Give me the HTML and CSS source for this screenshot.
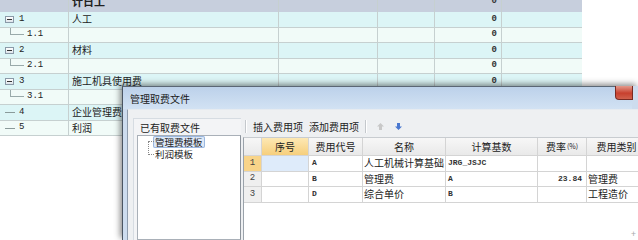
FILE: index.html
```html
<!DOCTYPE html>
<html lang="zh">
<head>
  <meta charset="UTF-8" />
  <title>管理取费文件</title>
  <link rel="stylesheet" href="styles.css">
</head>
<body>
  <div class="sheet">
    <div class="row head">
      <div class="c c0"></div>
      <div class="c c1"><span class="cut">计日工</span></div>
      <div class="c c2"></div>
      <div class="c c3"></div>
      <div class="c c4"><b class="num">0</b></div>
      <div class="c c5"></div>
    </div>
    <div class="row odd">
      <div class="c c0"><span class="box"></span><span class="no">1</span></div>
      <div class="c c1">人工</div>
      <div class="c c2"></div><div class="c c3"></div>
      <div class="c c4"><span class="num">0</span></div><div class="c c5"></div>
    </div>
    <div class="row even">
      <div class="c c0"><span class="elbow"></span><span class="no sub">1.1</span></div>
      <div class="c c1"></div>
      <div class="c c2"></div><div class="c c3"></div>
      <div class="c c4"><span class="num">0</span></div><div class="c c5"></div>
    </div>
    <div class="row odd">
      <div class="c c0"><span class="box"></span><span class="no">2</span></div>
      <div class="c c1">材料</div>
      <div class="c c2"></div><div class="c c3"></div>
      <div class="c c4"><span class="num">0</span></div><div class="c c5"></div>
    </div>
    <div class="row even">
      <div class="c c0"><span class="elbow"></span><span class="no sub">2.1</span></div>
      <div class="c c1"></div>
      <div class="c c2"></div><div class="c c3"></div>
      <div class="c c4"><span class="num">0</span></div><div class="c c5"></div>
    </div>
    <div class="row odd">
      <div class="c c0"><span class="box"></span><span class="no">3</span></div>
      <div class="c c1">施工机具使用费</div>
      <div class="c c2"></div><div class="c c3"></div>
      <div class="c c4"><span class="num">0</span></div><div class="c c5"></div>
    </div>
    <div class="row even">
      <div class="c c0"><span class="elbow"></span><span class="no sub">3.1</span></div>
      <div class="c c1"></div>
      <div class="c c2"></div><div class="c c3"></div>
      <div class="c c4"></div><div class="c c5"></div>
    </div>
    <div class="row odd">
      <div class="c c0"><span class="dash"></span><span class="no">4</span></div>
      <div class="c c1">企业管理费</div>
      <div class="c c2"></div><div class="c c3"></div>
      <div class="c c4"></div><div class="c c5"></div>
    </div>
    <div class="row even">
      <div class="c c0"><span class="dash"></span><span class="no">5</span></div>
      <div class="c c1">利润</div>
      <div class="c c2"></div><div class="c c3"></div>
      <div class="c c4"></div><div class="c c5"></div>
    </div>
  </div>

  <div class="dialog">
    <div class="titlebar">
      <span class="title">管理取费文件</span>
      <span class="close"></span>
    </div>
    <div class="client">
      <div class="files">
        <div class="files-head">已有取费文件</div>
        <div class="tree">
          <div class="tree-item selected">管理费模板</div>
          <div class="tree-item">利润模板</div>
        </div>
      </div>
      <div class="items">
        <div class="toolbar">
          <span class="sep"></span>
          <span class="tool">插入费用项</span>
          <span class="tool">添加费用项</span>
          <span class="sep"></span>
          <svg class="arrow" width="9" height="9" viewBox="0 0 9 9"><path d="M4.5 1 L8 4.5 H6 V8 H3 V4.5 H1 Z" fill="#c8c8c8"/></svg>
          <svg class="arrow" width="9" height="9" viewBox="0 0 9 9"><path d="M4.5 8 L8 4.5 H6 V1 H3 V4.5 H1 Z" fill="#4a78d0"/></svg>
        </div>
        <div class="grid">
          <div class="g-row g-head">
            <div class="g rn"></div>
            <div class="g w1 sorted">序号</div>
            <div class="g w2">费用代号</div>
            <div class="g w3">名称</div>
            <div class="g w4">计算基数</div>
            <div class="g w5">费率<small>(%)</small></div>
            <div class="g w6">费用类别</div>
          </div>
          <div class="g-row">
            <div class="g rn current">1</div>
            <div class="g w1 focus"></div>
            <div class="g w2 code">A</div>
            <div class="g w3">人工机械计算基础</div>
            <div class="g w4 code">JRG_JSJC</div>
            <div class="g w5"></div>
            <div class="g w6"></div>
          </div>
          <div class="g-row">
            <div class="g rn">2</div>
            <div class="g w1"></div>
            <div class="g w2 code">B</div>
            <div class="g w3">管理费</div>
            <div class="g w4 code">A</div>
            <div class="g w5 code right">23.84</div>
            <div class="g w6">管理费</div>
          </div>
          <div class="g-row">
            <div class="g rn">3</div>
            <div class="g w1"></div>
            <div class="g w2 code">D</div>
            <div class="g w3">综合单价</div>
            <div class="g w4 code">B</div>
            <div class="g w5"></div>
            <div class="g w6">工程造价</div>
          </div>
        </div>
      </div>
    </div>
    <span class="grip">+</span>
  </div>
</body>
</html>
```

FILE: styles.css
```css
:root {
  --cyan: #dcf5f6;
  --pale: #f1fbf8;
  --line: #c6d0d0;
  --cell: #d4d4d4;
}

* {
  box-sizing: border-box;
  margin: 0;
  padding: 0;
}

body {
  font-family: "Noto Sans CJK SC", "Noto Sans", sans-serif;
  font-size: 10px;
  color: #222;
  background: #ffffff;
  width: 638px;
  height: 240px;
  overflow: hidden;
  position: relative;
}

/* background sheet */
.sheet {
  width: 582px;
}

.row {
  display: flex;
  height: 15.5px;
  border-bottom: 1px solid var(--line);
}

.row.head {
  height: 12px;
  background: #c7cfdd;
  border-bottom: none;
}

.row.odd { background: var(--cyan); }
.row.even { background: var(--pale); }

.c {
  position: relative;
  display: flex;
  align-items: center;
  border-right: 1px solid var(--line);
  line-height: 1;
  overflow: hidden;
}

.c0 { width: 69px; }
.c1 { width: 210px; padding-left: 3px; }
.c2 { width: 99px; }
.c3 { width: 57px; }
.c4 { width: 67px; justify-content: flex-end; padding-right: 4px; }
.c5 { width: 80px; border-right: none; }

.cut {
  font-weight: bold;
  font-size: 11px;
  margin-top: -9px;
}

.head .num { margin-top: -9px; }

.num {
  font-family: "Liberation Mono", monospace;
  font-size: 9px;
  font-weight: bold;
  color: #333;
}

.no {
  font-family: "Liberation Mono", monospace;
  font-size: 9px;
  color: #222;
  margin-left: 6px;
}

.no.sub { margin-left: 27px; }

.box {
  position: absolute;
  left: 5px;
  top: 4px;
  width: 9px;
  height: 7px;
  border: 1px solid #8a9aa8;
  background: linear-gradient(#ffffff, #dde4ea);
}

.box::after {
  content: "";
  position: absolute;
  left: 1px;
  right: 1px;
  top: 2px;
  height: 1px;
  background: #333;
}

.box + .no { margin-left: 19px; }

.elbow {
  position: absolute;
  left: 10px;
  top: -4px;
  width: 14px;
  height: 11px;
  border-left: 1px solid #9aa;
  border-bottom: 1px solid #9aa;
}

.dash {
  position: absolute;
  left: 5px;
  top: 7px;
  width: 10px;
  height: 1px;
  background: #8a9a9a;
}

.dash + .no { margin-left: 19px; }

/* dialog */
.dialog {
  position: absolute;
  left: 122px;
  top: 86px;
  right: 0;
  bottom: 0;
  border-left: 1px solid #4a5562;
  background: #cddcee;
  box-shadow: -2px -2px 6px rgba(0, 0, 0, 0.45);
}

.titlebar {
  position: relative;
  height: 23px;
  margin-right: 6px;
  display: flex;
  align-items: center;
  padding-left: 7px;
  background: linear-gradient(#bcd1ea, #d2e2f3);
  border-top: 1px solid #5b6775;
}

.title {
  font-size: 10px;
  color: #1a1a1a;
}

.close {
  position: absolute;
  left: 492px;
  top: -1px;
  width: 18px;
  height: 14px;
  border: 1px solid #7a2a22;
  border-top: none;
  border-radius: 0 0 0 4px;
  background: linear-gradient(#e49a8c, #c8402e 55%, #d0604c);
}

.client {
  display: flex;
  gap: 2px;
  height: calc(100% - 23px);
  margin-left: 4px;
  padding: 8px 0 0 5px;
  border-left: 1px solid #8e9cad;
  border-top: 1px solid #e6ebf0;
  background: #eef0f2;
}

.files {
  flex: none;
  width: 108px;
  display: flex;
  flex-direction: column;
  border-top: 1px solid #d6dce2;
  border-left: 1px solid #d6dce2;
  background: #f3f4f6;
}

.files-head {
  height: 16px;
  padding-left: 6px;
  display: flex;
  align-items: center;
  color: #222;
}

.tree {
  flex: 1;
  margin-left: 3px;
  border: 1px solid #a9b0b8;
  border-right: 1px solid #8d949c;
  background: #ffffff;
  padding: 0 0 0 15px;
  position: relative;
}

.tree::before {
  content: "";
  position: absolute;
  left: 10px;
  top: 5px;
  width: 5px;
  height: 12px;
  border-left: 1px dotted #888;
  border-top: 1px dotted #888;
  border-bottom: 1px dotted #888;
}

.tree-item {
  height: 12px;
  line-height: 12px;
  font-size: 9.5px;
  padding: 0 2px;
  width: max-content;
}

.tree-item.selected {
  background: #dde8f7;
  border-radius: 2px;
  box-shadow: inset 0 0 0 1px #9bb8e0;
}

.items {
  flex: 1;
  min-width: 0;
  display: flex;
  flex-direction: column;
}

.toolbar {
  height: 19px;
  display: flex;
  align-items: center;
  gap: 6px;
  padding-left: 2px;
  margin-top: -1px;
}

.sep {
  width: 2px;
  height: 13px;
  border-left: 1px solid #c4c8cc;
  border-right: 1px solid #ffffff;
}

.tool {
  color: #222;
}

.arrow { margin-left: 3px; }

.grid {
  flex: 1;
  margin-top: 1px;
  background: #ffffff;
  border-left: 1px solid #9aa2aa;
  border-top: 1px solid #c8ccd0;
}

.g-row {
  display: flex;
  height: 15.5px;
  border-bottom: 1px solid var(--cell);
}

.g-row.g-head { height: 18px; }

.g {
  flex: none;
  display: flex;
  align-items: center;
  justify-content: center;
  border-right: 1px solid var(--cell);
  white-space: nowrap;
  overflow: hidden;
  line-height: 1;
}

.g-head .g {
  background: linear-gradient(#f7f7f7, #e9e9e9);
}

.g-head .g.sorted {
  background: linear-gradient(#fde8b4, #f6cf7c);
}

.g-head small {
  font-size: 7px;
  margin-left: 1px;
}

.rn { width: 18px; background: #efefef; font-family: "Liberation Mono", monospace; font-size: 9px; color: #444; }
.rn.current { background: #f8d489; }
.w1 { width: 47px; }
.w1.focus { background: #deebfa; }
.w2 { width: 54px; justify-content: flex-start; padding-left: 3px; }
.g-head .w2 { justify-content: center; padding-left: 0; }
.w3 { width: 83px; justify-content: flex-start; padding-left: 1px; }
.g-head .w3 { justify-content: center; padding-left: 0; }
.w4 { width: 92px; justify-content: flex-start; padding-left: 2px; }
.g-head .w4 { justify-content: center; padding-left: 0; }
.w5 { width: 49px; }
.w6 { width: 60px; justify-content: flex-start; padding-left: 1px; }
.g-head .w6 { justify-content: center; padding-left: 0; }

.code {
  font-family: "Liberation Mono", monospace;
  font-size: 8px;
  font-weight: bold;
  color: #333;
}

.right {
  justify-content: flex-end;
  padding-right: 4px;
}

.grip {
  position: absolute;
  right: 2px;
  bottom: 2px;
  font-size: 9px;
  color: #aaa;
  line-height: 1;
}
```
